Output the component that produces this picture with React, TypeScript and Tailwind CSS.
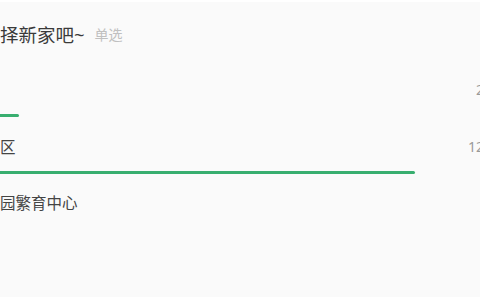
import React from 'react';

const options = [
  { label: '', votes: 2 },
  { label: '区', votes: 12 },
  { label: '园繁育中心', votes: 0 },
];

const total = options.reduce((s, o) => s + o.votes, 0);

export default function App() {
  return (
    <div
      className="w-[480px] h-[300px] overflow-hidden bg-[#fafafa] border-t-2 border-b-[3px] border-white"
      style={{ fontFamily: '"Noto Sans", "Noto Sans CJK SC", sans-serif' }}
    >
      {/* Title */}
      <div className="pt-[21px] flex items-center h-[45px] w-[484px]">
        <span className="text-[18.5px] leading-6 text-[#3a3a3a]">择新家吧~</span>
        <span className="ml-[10px] text-[14px] leading-6 text-[#c0c0c0]">单选</span>
      </div>

      {/* Options */}
      <div className="pt-[33px] flex flex-col gap-[19.5px] w-[484px]">
        {options.map((o, i) => (
          <div key={i} className="flex flex-col">
            <div className="flex items-center justify-between h-5">
              <span className="text-[15.5px] text-[#444] leading-5">{o.label}</span>
              {o.votes > 0 && (
                <span className="text-[14px] text-[#999] leading-5">{o.votes}</span>
              )}
            </div>
            {o.votes > 0 && (
              <div className="mt-[14px] ml-[-60px] w-[554px] h-[3px]">
                <div
                  className="h-full rounded-full bg-[#38ae6f]"
                  style={{ width: `${(o.votes / total) * 100}%` }}
                />
              </div>
            )}
          </div>
        ))}
      </div>
    </div>
  );
}
